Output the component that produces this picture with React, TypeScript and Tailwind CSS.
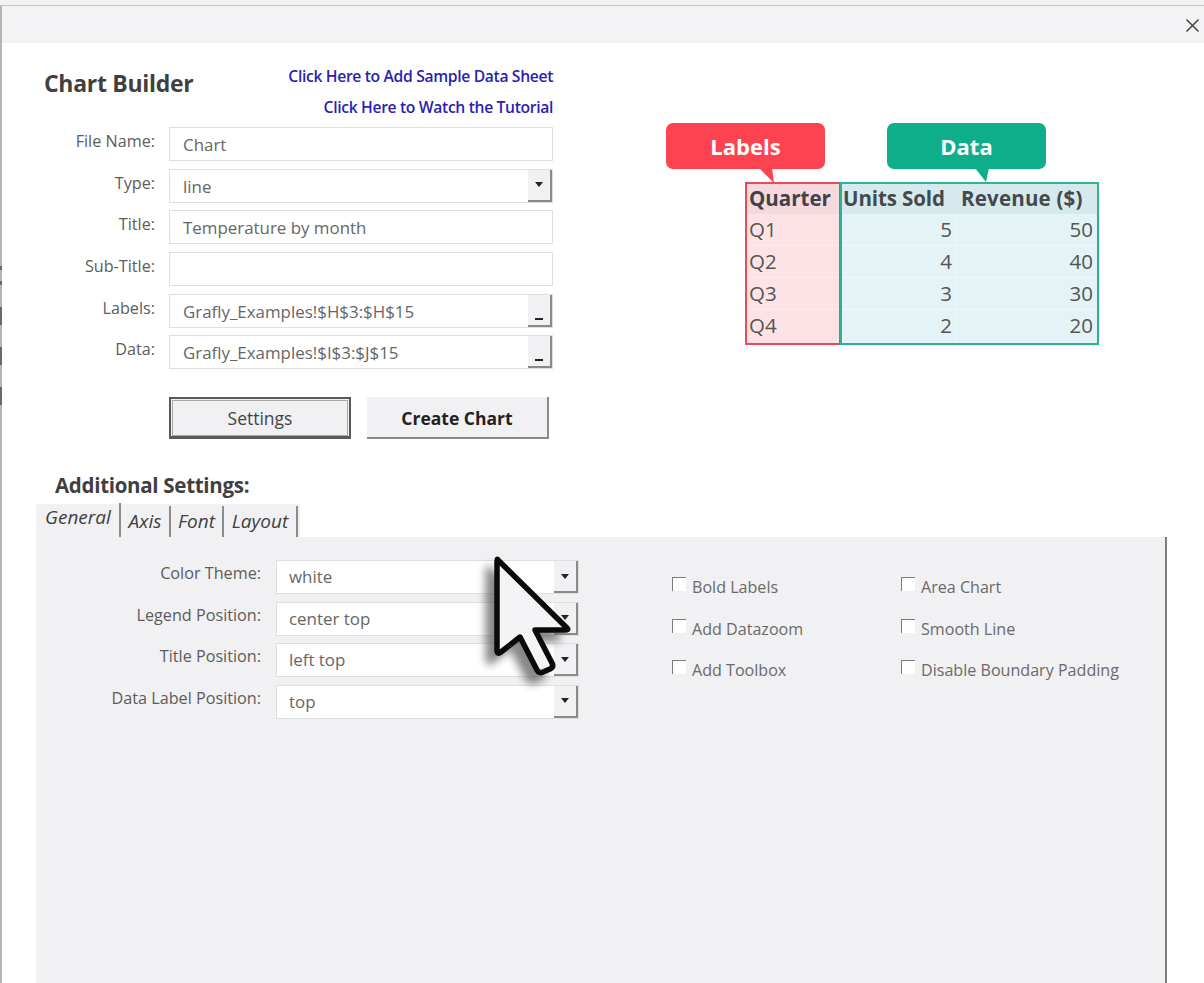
import React from "react";

const font = { fontFamily: '"Open Sans", "Noto Sans", sans-serif' };

function Arrow({ dash = false }: { dash?: boolean }) {
  return (
    <div className="w-[24px] h-full shrink-0 bg-[#f1f0f2] border-r-2 border-b-2 border-[#8a8a8a] flex items-center justify-center relative">
      {dash ? (
        <div className="w-[8px] h-[2px] bg-[#222] mt-[18px]" />
      ) : (
        <div className="w-0 h-0 border-l-[4px] border-r-[4px] border-t-[5px] border-l-transparent border-r-transparent border-t-[#222]" />
      )}
    </div>
  );
}

function Field({ label, value, arrow, dash, panel = false }: { label: string; value?: string; arrow?: boolean; dash?: boolean; panel?: boolean }) {
  return (
    <div className="flex items-start h-[34px]">
      <div className={`${panel ? "w-[225px] leading-[27px]" : "w-[155px] leading-[28px]"} text-right text-[16.2px] text-[#5c5c5c] shrink-0 whitespace-nowrap`}>{label}</div>
      <div className={`${panel ? "ml-[15px] w-[303px]" : "ml-[14px] w-[384px]"} h-[34px] bg-white border border-[#dfdfe1] flex items-stretch justify-between`}>
        <span className={`${panel ? "pl-[12px] leading-[32px]" : "pl-[13px] leading-[33px]"} text-[16.9px] text-[#666]`}>{value}</span>
        {(arrow || dash) && <Arrow dash={dash} />}
      </div>
    </div>
  );
}

function Check({ label }: { label: string }) {
  return (
    <div className="flex items-center h-[20px] gap-[6px]">
      <div className="w-[14px] h-[14px] -mt-[6px] bg-white border-l border-t border-[#7c7c7c]" />
      <span className="text-[16.1px] text-[#6a6a6a] whitespace-nowrap">{label}</span>
    </div>
  );
}

const rows = [["Q1", "5", "50"], ["Q2", "4", "40"], ["Q3", "3", "30"], ["Q4", "2", "20"]];

function Bubble({ text, color, tail }: { text: string; color: string; tail: string }) {
  return (
    <div className={`relative w-[159px] h-[46px] rounded-[7px] ${color} flex items-center justify-center text-white text-[22px] font-bold pt-[1px]`}>
      {text}
      <svg className="absolute left-[86px] top-[45px]" width="24" height="15" viewBox="0 0 24 15">
        <polygon points={tail} fill={text === "Labels" ? "#fd434f" : "#0eae8b"} />
      </svg>
    </div>
  );
}

const CURSOR = "M28,15 L97,83 Q99,85 95,85 L65,85 L82,118 Q84,122 80,124 L73,127 Q69,129 67,125 L50,92 L31,107 Q27,110 27,105 L27,17 Q27,13 28,15 Z";
const edgeMarks = ["top-[266px] h-[4px]", "top-[281px] h-[4px]", "top-[307px] h-[18px]", "top-[347px] h-[18px]", "top-[387px] h-[18px]"];

export default function App() {
  return (
    <div className="relative w-[1204px] h-[983px] overflow-hidden bg-white" style={font}>
      <div className="h-[5px] bg-[#f3f3f3] border-b border-[#c4c4c4] box-content" />
      <div className="h-[37px] bg-[#f3f2f4] border-l-2 border-[#b5b5b5] flex items-center justify-end pr-[4px]">
        <svg width="15" height="15" viewBox="0 0 15 15" className="mt-[1px]">
          <path d="M1.5 1.5 L13.5 13.5 M13.5 1.5 L1.5 13.5" stroke="#444" strokeWidth="1.5" fill="none" />
        </svg>
      </div>
      <div className="h-[940px] border-l-2 border-[#b5b5b5] flex flex-col">
        <div className="flex h-[431px]">
          <div className="w-[642px] shrink-0 -ml-[2px]">
            <div className="relative h-[84px]">
              <div className="flex justify-between items-start w-[553px]">
                <h1 className="ml-[44px] mt-[24px] text-[23px] leading-[32px] font-bold text-[#3f3f3f] tracking-[-0.3px] whitespace-nowrap">Chart Builder</h1>
                <div className="text-right text-[#2a1fb0] text-[15.7px] font-semibold tracking-[-0.35px] pt-[22px] whitespace-nowrap">
                  <div className="leading-[22px]">Click Here to Add Sample Data Sheet</div>
                  <div className="leading-[22px] mt-[9px]">Click Here to Watch the Tutorial</div>
                </div>
              </div>
            </div>
            <div className="flex flex-col gap-[7.67px]">
              <Field label="File Name:" value="Chart" />
              <Field label="Type:" value="line" arrow />
              <Field label="Title:" value="Temperature by month" />
              <Field label="Sub-Title:" value="" />
              <Field label="Labels:" value="Grafly_Examples!$H$3:$H$15" dash />
              <Field label="Data:" value="Grafly_Examples!$I$3:$J$15" dash />
            </div>
            <div className="flex ml-[169px] gap-[16px] mt-[28px]">
              <button className="w-[182px] h-[42px] bg-[#f1f0f2] border-2 border-[#5a5a5a] border-b-[3px] outline outline-1 -outline-offset-4 outline-[#a8a8a8] text-[17.5px] text-[#444]">Settings</button>
              <button className="w-[182px] h-[42px] bg-[#f1f0f2] border-r-2 border-b-2 border-[#8a8a8a] text-[17.5px] font-bold text-[#222] pt-[1px]">Create Chart</button>
            </div>
          </div>
          <div className="pt-[80px] pl-[24px]">
            <div className="flex gap-[62px]">
              <Bubble text="Labels" color="bg-[#fd434f]" tail="7,0 20,0 22,15" />
              <Bubble text="Data" color="bg-[#0eae8b]" tail="2,0 16,0 13,14" />
            </div>
            <div className="flex ml-[79px] mt-[13px] text-[20.5px] text-[#555] leading-[30px]">
              <div className="w-[96px] h-[163px] border-2 border-[#ec4a58] bg-[#fde3e6] shrink-0">
                <div className="h-[30px] bg-[#f6d9dd] font-bold text-[#44404a] pl-[2px] whitespace-nowrap leading-[29px]">Quarter</div>
                {rows.map((r) => (
                  <div key={r[0]} className="h-[32px] pl-[2px] border-b border-[#f5eef0] last:border-b-0">{r[0]}</div>
                ))}
              </div>
              <div className="-ml-[1px] w-[259px] h-[163px] border-2 border-[#2bb394] bg-[#e3f3f6] shrink-0">
                <div className="flex h-[30px] bg-[#d6e9ec] font-bold text-[#434a4e] whitespace-nowrap leading-[29px]">
                  <div className="w-[114px] pl-[1px] tracking-[-0.1px]">Units Sold</div>
                  <div className="flex-1 pl-[5px] tracking-[0.2px]">Revenue ($)</div>
                </div>
                {rows.map((r) => (
                  <div key={r[0]} className="flex h-[32px] border-b border-[#f0f8fa] last:border-b-0">
                    <div className="w-[114px] text-right pr-[3px] border-r border-[#f0f8fa]">{r[1]}</div>
                    <div className="flex-1 text-right pr-[4px]">{r[2]}</div>
                  </div>
                ))}
              </div>
            </div>
          </div>
        </div>
        <div className="h-[28px] pl-[53px] text-[20.5px] font-bold text-[#3f3f3f] leading-[28px] tracking-[-0.3px] mt-[-3px] whitespace-nowrap">Additional Settings:</div>
        <div className="ml-[34px] mt-[5px] h-[33px] w-[264px] bg-[#f1f0f2] flex items-end text-[19px] italic text-[#3f3f3f]">
          <div className="h-[34px] w-[85px] pl-[9px] leading-[29px] border-r-2 border-[#8d8d8d]">General</div>
          <div className="h-[31px] w-[50px] text-center leading-[31px] border-r-2 border-[#8d8d8d]">Axis</div>
          <div className="h-[31px] w-[53px] text-center leading-[31px] border-r-2 border-[#8d8d8d]">Font</div>
          <div className="h-[31px] w-[74px] text-center leading-[31px] border-r-2 border-[#8d8d8d]">Layout</div>
        </div>
        <div className="ml-[34px] w-[1131px] flex-1 bg-[#f1f0f2] border-r-2 border-[#7d7d7d] flex pt-[23px]">
          <div className="flex flex-col gap-[7.67px] w-[546px] shrink-0">
            <Field label="Color Theme:" value="white" arrow panel />
            <Field label="Legend Position:" value="center top" arrow panel />
            <Field label="Title Position:" value="left top" arrow panel />
            <Field label="Data Label Position:" value="top" arrow panel />
          </div>
          <div className="flex gap-[94px] ml-[90px] pt-[17px]">
            <div className="flex flex-col gap-[21.7px] w-[135px]">
              <Check label="Bold Labels" />
              <Check label="Add Datazoom" />
              <Check label="Add Toolbox" />
            </div>
            <div className="flex flex-col gap-[21.7px]">
              <Check label="Area Chart" />
              <Check label="Smooth Line" />
              <Check label="Disable Boundary Padding" />
            </div>
          </div>
        </div>
      </div>
      {edgeMarks.map((m) => (
        <div key={m} className={`absolute left-0 w-[2px] bg-[#6a6a6a] ${m}`} />
      ))}
      <svg className="absolute left-[470px] top-[545px]" width="120" height="150" viewBox="0 0 120 150">
        <defs>
          <filter id="blur" x="-30%" y="-30%" width="160%" height="160%">
            <feGaussianBlur stdDeviation="4" />
          </filter>
        </defs>
        <path d={CURSOR} fill="#555" opacity="0.7" stroke="#555" strokeWidth="5" strokeLinejoin="round" filter="url(#blur)" transform="translate(-9,9)" />
        <path d={CURSOR} fill="#f4f3f5" stroke="#0a0a0a" strokeWidth="5.5" strokeLinejoin="round" />
      </svg>
    </div>
  );
}
